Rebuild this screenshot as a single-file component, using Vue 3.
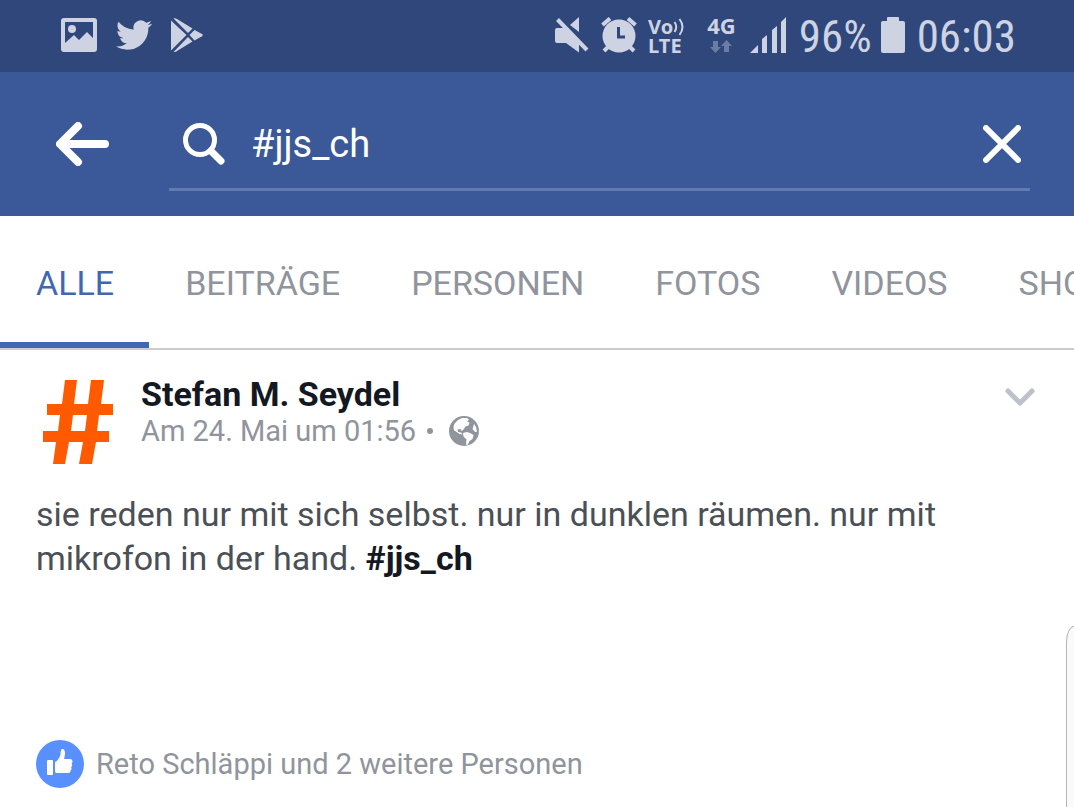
<template>
  <div class="app">
    <div class="status-bar">
      <div class="status-left">
        <svg class="ic-picture" viewBox="0 0 36 34" width="36" height="34">
          <path fill-rule="evenodd" d="M3 0h30a3 3 0 0 1 3 3v28a3 3 0 0 1-3 3H3a3 3 0 0 1-3-3V3a3 3 0 0 1 3-3zM4 4v21l9-8 5 5 8-8 6 6V4z" />
          <circle cx="11" cy="11" r="4" />
        </svg>
        <svg class="ic-bird" viewBox="0 2 24 20" width="36" height="30">
          <path d="M23.953 4.57a10 10 0 01-2.825.775 4.958 4.958 0 002.163-2.723c-.951.555-2.005.959-3.127 1.184a4.92 4.92 0 00-8.384 4.482C7.69 8.095 4.067 6.13 1.64 3.162a4.822 4.822 0 00-.666 2.475c0 1.71.87 3.213 2.188 4.096a4.904 4.904 0 01-2.228-.616v.06a4.923 4.923 0 003.946 4.827 4.996 4.996 0 01-2.212.085 4.936 4.936 0 004.604 3.417 9.867 9.867 0 01-6.102 2.105c-.39 0-.779-.023-1.17-.067a13.995 13.995 0 007.557 2.209c9.053 0 13.998-7.496 13.998-13.985 0-.21 0-.42-.015-.63A9.935 9.935 0 0024 4.59z" />
        </svg>
        <svg class="ic-play" viewBox="0 0 32 34" width="32" height="34">
          <path d="M0 2.500 15.500 17 0 32.500z" />
          <path d="M2.500.500c1-.500 2-.200 3.500.500l15.500 9.500-4.500 4.500z" />
          <path d="M2.500 34c1 .300 2 0 3.500-1l15.500-9.500-4.500-4.500z" />
          <path d="M23.500 12l7.500 4c1 .600 1 1.600 0 2.200l-7.500 4.300-5-5.500z" />
        </svg>
      </div>
      <div class="status-right">
        <svg class="ic-mute" viewBox="0 0 34 36" width="34" height="36">
          <path d="M2 11h8l14 14v10.500L11 26H2a2 2 0 0 1-2-2V13a2 2 0 0 1 2-2z" />
          <path d="M24 0v15l-9-7z" />
          <path d="M2.500 2.500 32 33" class="mute-line" />
        </svg>
        <svg class="ic-alarm" viewBox="0 0 36 36" width="36" height="36">
          <circle cx="18" cy="19" r="16.500" />
          <path d="M1.500 8 9 1.500M34.500 8 27 1.500M7 30l-4 4M29 30l4 4" class="alarm-legs" />
          <path d="M17.500 10v10H24" class="alarm-hands" />
        </svg>
        <div class="volte">
          <span class="vo">Vo<svg viewBox="0 0 12 18" width="12" height="18"><path d="M1.500 4q3.500 5 0 10M6.500 1q6 8 0 16" /></svg></span>
          <span>LTE</span>
        </div>
        <div class="network">
          <span>4G</span>
          <svg viewBox="0 0 22 14" width="22" height="14">
            <path d="M3 1h5v6h3l-5.500 6L0 7h3zM14 12h5V6h3l-5.500-6L11 6h3z" />
          </svg>
        </div>
        <svg class="ic-signal" viewBox="0 0 36 36" width="36" height="36">
          <path d="M0 36l8-8v8zM12 36V22l5-4v18zM22 36V13l5-4v27zM31 36V5l5-5v36z" />
        </svg>
        <span class="big">96%</span>
        <svg class="ic-battery" viewBox="0 0 24 36" width="24" height="36">
          <path d="M7 0h10a1 1 0 0 1 1 1v3h4a2 2 0 0 1 2 2v28a2 2 0 0 1-2 2H2a2 2 0 0 1-2-2V6a2 2 0 0 1 2-2h4V1a1 1 0 0 1 1-1z" />
        </svg>
        <span class="big">06:03</span>
      </div>
    </div>

    <header class="header">
      <button class="icon-btn" type="button" aria-label="Zurück">
        <svg viewBox="0 0 54 44" width="54" height="44">
          <path d="M22 4 4 22l18 18M5 22h44" class="stroke-back" />
        </svg>
      </button>
      <div class="search">
        <svg viewBox="0 0 42 42" width="42" height="42">
          <circle cx="17" cy="17" r="14.500" class="stroke-search" />
          <path d="M28 28l10 10" class="stroke-handle" />
        </svg>
        <input v-model="query" type="text" aria-label="Suche">
        <button class="icon-btn" type="button" aria-label="Löschen" @click="query = ''">
          <svg viewBox="0 0 38 38" width="38" height="38">
            <path d="M3 3l32 32M35 3 3 35" class="stroke-close" />
          </svg>
        </button>
      </div>
    </header>

    <nav class="tabs">
      <button
        v-for="tab in tabs"
        :key="tab"
        type="button"
        class="tab"
        :class="{ active: tab === activeTab }"
        @click="activeTab = tab"
      >{{ tab }}</button>
    </nav>

    <article class="post">
      <div class="post-header">
        <svg class="avatar" viewBox="0 0 84 84" width="84" height="84">
          <path fill-rule="evenodd" d="M29 0h12l-3 24h14l3-24h13l-3 24h12v11H63l-2 16h12v11H60l-4 22H43l4-22H33l-4 22H17l3-22H7V51h15l2-16H11V24h15zM37 35l-2 16h14l2-16z" />
        </svg>
        <div class="post-meta">
          <a class="author" href="#">Stefan M. Seydel</a>
          <div class="date">
            <span>Am 24. Mai um 01:56</span>
            <span class="dot"></span>
            <svg viewBox="0 0 30 30" width="30" height="30">
              <circle cx="15" cy="15" r="15" class="globe" />
              <path d="M4.500 11l1-3.500L9 4l4-2 5 0 2 1.500-2 2 2.500 1-1 3-3 1-2 3-2 1.500-1-2-3 .5.5 2.500 3 .5 1.500 2-3-.5-3.500-2.500-2-1z" class="land" />
              <path d="M14 17l4-1 3 1 3.500 2-1 4-3 2-2 4-1.500-.5.5-5-3-3z" class="land" />
              <path d="M25 8l2 3 1 5-2 0-2.500-3z" class="land" />
            </svg>
          </div>
        </div>
        <button class="icon-btn menu" type="button" aria-label="Mehr">
          <svg viewBox="0 0 30 18" width="30" height="18">
            <path d="M3 3l12 12L27 3" class="stroke-menu" />
          </svg>
        </button>
      </div>
      <p class="post-text">
        sie reden nur mit sich selbst. nur in dunklen räumen. nur mit mikrofon in der hand. <a href="#">#jjs_ch</a>
      </p>
      <div class="likes">
        <svg viewBox="0 0 48 48" width="48" height="48">
          <circle cx="24" cy="24" r="24" class="like-bg" />
          <path d="M12 20h4a1 1 0 0 1 1 1v13a1 1 0 0 1-1 1h-4a1 1 0 0 1-1-1V21a1 1 0 0 1 1-1z" class="thumb" />
          <path d="M19 22c3-1 5-5 5.500-8 0-3 .5-5 2-5 3 0 3 5 1.500 10h6c3 0 3 4 1.500 4.500 1 1 1 3-.5 3.500 1 1 .5 3-.5 3.500 0 2-1 2.500-3 2.500H21c-1 0-2-.5-2-2z" class="thumb" />
        </svg>
        <span>Reto Schläppi und 2 weitere Personen</span>
      </div>
      <div class="edge-handle"></div>
    </article>
  </div>
</template>

<script setup>
import { ref } from 'vue'

const query = ref('#jjs_ch')
const activeTab = ref('ALLE')
const tabs = ['ALLE', 'BEITRÄGE', 'PERSONEN', 'FOTOS', 'VIDEOS', 'SHOPS']
</script>

<style>
body {
  margin: 0;
  background: #ffffff;
}
</style>

<style scoped>
.app {
  display: flex;
  flex-direction: column;
  min-height: 100vh;
  overflow: hidden;
  font-family: Roboto, "Liberation Sans", sans-serif;
}
svg {
  display: block;
  flex-shrink: 0;
}
a {
  text-decoration: none;
}
button {
  font-family: inherit;
  background: none;
  border: none;
  padding: 0;
  cursor: pointer;
}

/* Status bar */
.status-bar {
  display: flex;
  justify-content: space-between;
  align-items: center;
  height: 70px;
  padding: 0 58px 2px 61px;
  background: #2f477a;
  color: #cdd3e3;
  fill: #cdd3e3;
}
.status-left {
  display: flex;
  align-items: center;
  gap: 19px;
}
.status-right {
  display: flex;
  align-items: center;
}
.mute-line {
  stroke: #cdd3e3;
  stroke-width: 4;
}
.ic-alarm {
  margin: 0 11px 0 12px;
}
.alarm-legs {
  stroke: #cdd3e3;
  stroke-width: 4;
}
.alarm-hands {
  fill: none;
  stroke: #2f477a;
  stroke-width: 3;
}
.volte,
.network {
  display: flex;
  flex-direction: column;
  font-family: "Noto Sans", sans-serif;
  font-weight: 700;
  font-size: 20px;
  line-height: 19px;
}
.volte {
  padding-top: 2px;
}
.vo {
  display: flex;
  align-items: center;
}
.vo path {
  fill: none;
  stroke: #cdd3e3;
  stroke-width: 2;
}
.network {
  align-items: center;
  gap: 7px;
  margin: 0 14px 0 22px;
  font-size: 22px;
  line-height: 16px;
}
.network svg {
  fill: #6b7ca5;
}
.big {
  padding-top: 4px;
  font-family: "Roboto Condensed", "Liberation Sans Narrow", Roboto, sans-serif;
  font-size: 45px;
  line-height: 54px;
}
.ic-signal {
  margin-right: 13px;
}
.ic-battery {
  margin: 0 12px 0 9px;
}

/* Search header */
.header {
  display: flex;
  align-items: center;
  height: 144px;
  padding: 0 44px 0 56px;
  gap: 59px;
  background: #3b5998;
}
.header path,
.header circle {
  fill: none;
  stroke: #ffffff;
  stroke-linecap: round;
  stroke-linejoin: round;
}
.header .stroke-back {
  stroke-width: 8;
}
.header .stroke-search {
  stroke-width: 5;
}
.header .stroke-handle {
  stroke-width: 7;
}
.header .stroke-close {
  stroke-width: 6;
}
.search {
  flex: 1;
  display: flex;
  align-items: center;
  align-self: stretch;
  margin: 25px 0;
  padding: 0 9px 0 14px;
  border-bottom: 3px solid #617ab0;
  border-top: 3px solid transparent;
}
.search input {
  flex: 1;
  min-width: 0;
  padding: 0;
  margin: 0 26px;
  border: none;
  outline: none;
  background: none;
  color: #ffffff;
  font-family: inherit;
  font-size: 38px;
}

/* Tabs */
.tabs {
  display: flex;
  overflow: hidden;
  height: 132px;
  border-bottom: 2px solid #cbccce;
}
.tab {
  flex-shrink: 0;
  padding: 8px 35px 0 36px;
  border-bottom: 6px solid transparent;
  color: #90949c;
  font-size: 34px;
}
.tab.active {
  color: #4267b2;
  border-bottom-color: #4267b2;
}

/* Post */
.post {
  position: relative;
  flex: 1;
  padding: 24px 36px 19px;
}
.post-header {
  display: flex;
  align-items: flex-start;
  padding-top: 6px;
}
.avatar {
  fill: #ff5a00;
}
.post-meta {
  flex: 1;
  margin-left: 21px;
}
.author {
  display: block;
  color: #141823;
  font-weight: 700;
  font-size: 34px;
  line-height: 28px;
}
.date {
  display: flex;
  align-items: center;
  margin-top: 5px;
  color: #90949c;
  font-size: 29px;
  line-height: 36px;
}
.dot {
  width: 6px;
  height: 6px;
  margin: 0 16px 0 11px;
  border-radius: 50%;
  background: #90949c;
}
.globe {
  fill: #90949c;
}
.land {
  fill: #ffffff;
}
.menu {
  margin: 8px 3px 0 0;
}
.stroke-menu {
  fill: none;
  stroke: #bdc1c9;
  stroke-width: 5;
  stroke-linecap: round;
  stroke-linejoin: round;
}
.post-text {
  margin: 28px 0 0;
  color: #4b4f56;
  font-size: 34px;
  line-height: 44px;
}
.post-text a {
  color: #141823;
  font-weight: 700;
}
.likes {
  display: flex;
  align-items: center;
  gap: 12px;
  margin-top: 160px;
  color: #90949c;
  font-size: 29px;
}
.like-bg {
  fill: #5890ff;
}
.thumb {
  fill: #ffffff;
}

/* Edge panel peeking in from the right */
.edge-handle {
  position: absolute;
  top: 276px;
  right: 0;
  bottom: 0;
  width: 7px;
  border-left: 1px solid #b4b4b4;
  border-top: 1px solid #b4b4b4;
  border-top-left-radius: 8px 16px;
  background: #fafafa;
}
</style>
